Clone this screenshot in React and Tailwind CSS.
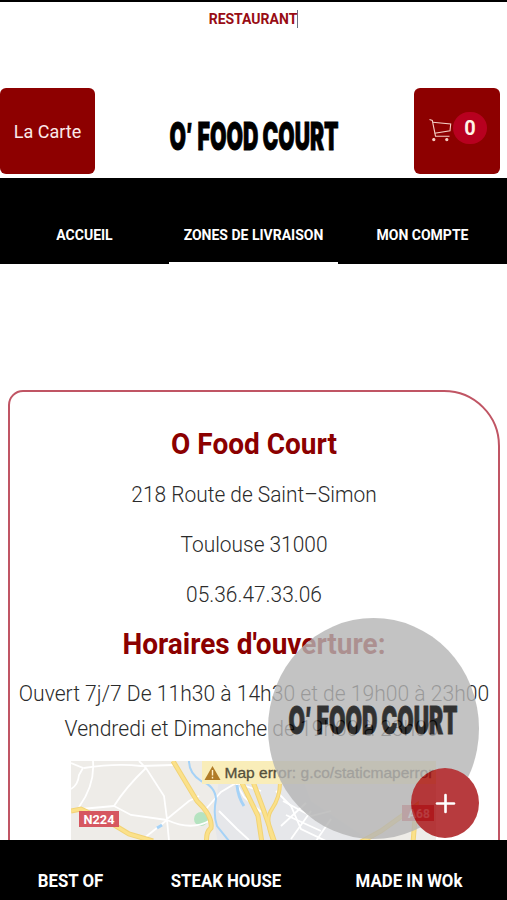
import { Plus } from "lucide-react";

const navItems = [
  { label: "ACCUEIL", active: false },
  { label: "ZONES DE LIVRAISON", active: true },
  { label: "MON COMPTE", active: false },
];

const address = ["218 Route de Saint–Simon", "Toulouse 31000", "05.36.47.33.06"];

const hours = [
  "Ouvert 7j/7 De 11h30 à 14h30 et de 19h00 à 23h00",
  "Vendredi et Dimanche de 19h00 à 23h00",
];

function Logo() {
  return (
    <svg
      viewBox="0 0 172 40"
      className="block w-[172px] h-10"
      role="img"
      fontSize="38"
      fontWeight="900"
      fontFamily="Inter, sans-serif"
      stroke="#000"
      strokeWidth="0.9"
    >
      <text x="0.5" y="33.5" textLength="16.5" lengthAdjust="spacingAndGlyphs">O</text>
      <text x="17" y="31" fontSize="33" textLength="7" lengthAdjust="spacingAndGlyphs" strokeWidth="0.3">′</text>
      <text x="28.5" y="33.5" textLength="61" lengthAdjust="spacingAndGlyphs">FOOD</text>
      <text x="93.5" y="33.5" textLength="76" lengthAdjust="spacingAndGlyphs">COURT</text>
    </svg>
  );
}

function CartIcon() {
  return (
    <svg viewBox="0 0 24 24" className="w-6 h-6" fill="none" stroke="#f6cfc4" strokeWidth="1.1">
      <path d="M0.5 1.5 L3.3 2.4 L6.5 18.2 H20.5" />
      <path d="M3.8 4.2 L21.7 6 L21 12.7 L5.6 15.3" />
      <circle cx="4.8" cy="21.6" r="1.1" fill="#f6cfc4" />
      <circle cx="17.8" cy="21.6" r="1.1" fill="#f6cfc4" />
    </svg>
  );
}

// Static map of the surroundings
function StreetMap() {
  return (
    <svg viewBox="0 0 365 100" className="block w-[365px] h-[100px] mr-0.5">
      <rect width="365" height="100" fill="#eeece8" />
      <path d="M150 0 L225 0 L240 40 L300 80 V100 H150 L143 60 Z" fill="#e6e7ea" />
      <circle cx="130" cy="58" r="7" fill="#b5e3c0" />
      <g fill="none" stroke="#fff" strokeWidth="1.8">
        <path d="M0 28 Q7 24 8 14 L12 7 L0 2" />
        <path d="M8 46 Q24 24 22 0" />
        <path d="M13 7 Q45 2 70 5 L102 4" />
        <path d="M68 0 L75 7 L93 35 L96 58 L118 40 L128 35" />
        <path d="M75 7 Q55 26 43 45 L60 54 L96 59" />
        <path d="M43 45 L10 48 M96 59 L72 78 M96 59 L98 80 M96 59 Q120 70 138 60" />
        <path d="M135 48 L150 31 L165 22 L173 36 L190 51" />
        <path d="M148 50 L166 68 L178 79 M165 22 L190 30 M205 30 L220 45 L230 68 L255 80" />
        <path d="M210 65 L235 42 M212 40 L240 55 L260 50 M215 54 L250 70 M220 78 L240 50 M245 80 L260 58" />
      </g>
      <g fill="none" stroke="#a5d2f7" strokeWidth="2">
        <path d="M118 0 Q118 12 130 20 Q144 25 145 38 Q142 54 146 65 L158 80" />
        <path d="M166 24 Q167 36 173 45" strokeWidth="3" />
        <path d="M86 67 L91 64" strokeWidth="3" />
      </g>
      <g fill="none" stroke="#f2d375" strokeWidth="5">
        <path d="M102 0 L126 40 Q142 55 140 67 Q134 72 136 84" />
        <path d="M0 50 L10 48 L40 62 L58 73 L82 80" />
        <path d="M170 20 L187 55 L191 82 M181 18 L193 50 L204 82" />
        <path d="M209 22 Q209 36 201 48 Q193 58 203 82" strokeWidth="4" />
        <path d="M288 82 L310 70 L345 45 L342 82" />
      </g>
      <g fill="none" stroke="#fbe18a" strokeWidth="3">
        <path d="M102 0 L126 40 Q142 55 140 67 Q134 72 136 84" />
        <path d="M0 50 L10 48 L40 62 L58 73 L82 80" />
        <path d="M170 20 L187 55 L191 82 M181 18 L193 50 L204 82" />
        <path d="M209 22 Q209 36 201 48 Q193 58 203 82" strokeWidth="2" />
        <path d="M288 82 L310 70 L345 45 L342 82" />
      </g>
      <rect x="8" y="50" width="40" height="16" fill="#d65760" />
      <text x="12.5" y="63" fontSize="13" fontWeight="700" fill="#fff" textLength="31" lengthAdjust="spacingAndGlyphs" fontFamily="Roboto, sans-serif">
        N224
      </text>
      <rect x="331" y="44" width="32" height="16" fill="#d65760" />
      <text x="337" y="57" fontSize="13" fontWeight="700" fill="#fff" textLength="22" lengthAdjust="spacingAndGlyphs" fontFamily="Roboto, sans-serif">
        A68
      </text>
      <rect x="131" y="0" width="234" height="23" fill="#f9edb9" />
      <path d="M141.5 5 L149.5 19 H133.5 Z" fill="#b17c27" />
      <path d="M141.5 9 V14.5 M141.5 15.8 V17.4" stroke="#fff0c8" strokeWidth="1.4" />
      <text x="153.5" y="17" fontSize="14.5" fill="#55503c" textLength="209" lengthAdjust="spacingAndGlyphs" fontFamily="Liberation Sans, sans-serif" stroke="#55503c" strokeWidth="0.3">
        Map error: g.co/staticmaperror
      </text>
    </svg>
  );
}

export default function App() {
  return (
    <div className="relative flex flex-col w-[507px] h-[900px] overflow-hidden bg-white border-t-2 border-black font-[Roboto,sans-serif]">
      {/* Top bar */}
      <header className="flex flex-col h-44 shrink-0">
        <div className="flex justify-center pt-2">
          <span className="h-[18px] border-r border-gray-500 text-sm leading-[19px] font-bold text-[#980c14]">
            RESTAURANT
          </span>
        </div>
        <div className="flex items-center justify-between mt-[60px] pr-[7px]">
          <button className="w-[95px] h-[86px] pt-0.5 rounded-md bg-[#8d0000] text-lg text-[#fbeaea]">
            <span className="inline-block scale-y-105">La Carte</span>
          </button>
          <div className="pt-2.5">
            <Logo />
          </div>
          <button className="flex items-center w-[86px] h-[86px] pl-[15px] pb-1.5 rounded-md bg-[#8d0000]">
            <span className="pt-1">
              <CartIcon />
            </span>
            <span className="flex items-center justify-center w-[34px] h-8 rounded-full bg-[#b8001f] text-xl font-bold text-[#fff3e6]">
              0
            </span>
          </button>
        </div>
      </header>

      {/* Tabs */}
      <nav className="grid grid-cols-3 h-[86px] shrink-0 bg-black">
        {navItems.map((item) => (
          <a
            key={item.label}
            className={`flex items-center justify-center pt-[29px] border-b-2 text-sm font-bold whitespace-nowrap text-white ${
              item.active ? "border-white" : "border-black"
            }`}
          >
            <span className="scale-y-105">{item.label}</span>
          </a>
        ))}
      </nav>

      {/* Restaurant card */}
      <main className="flex-1 min-h-0 overflow-hidden pl-2 pt-[126px] pr-[7px]">
        <section className="flex flex-col items-center h-[600px] pt-7 border-2 border-[#c05564] rounded-tl-[15px] rounded-tr-[56px] whitespace-nowrap text-[#2b2b2b]">
          <h1 className="scale-y-105 text-[28px] leading-[50px] font-bold text-[#8b0000]">O Food Court</h1>
          {address.map((line) => (
            <p key={line} className="scale-y-105 text-[20.9px] leading-[50px] font-light">
              {line}
            </p>
          ))}
          <h2 className="scale-y-105 text-[28px] leading-[50px] font-bold text-[#8b0000]">Horaires d'ouverture:</h2>
          <div className="pt-1.5 pb-[15px] text-center">
            {hours.map((line) => (
              <p key={line} className="scale-y-105 text-[21.1px] leading-[35px] font-light last:pr-[5px]">
                {line}
              </p>
            ))}
          </div>
          <StreetMap />
        </section>
      </main>

      {/* Category bar */}
      <footer className="flex items-center h-[60px] shrink-0 pt-[23px] bg-black text-[16.8px] font-bold whitespace-nowrap text-white">
        <span className="w-[141px] text-center scale-y-105">BEST OF</span>
        <span className="w-[170px] text-center scale-y-105">STEAK HOUSE</span>
        <span className="flex-1 text-center scale-y-105">MADE IN WOk</span>
      </footer>

      {/* Floating bubble */}
      <div className="absolute left-[268px] top-[616px] w-[211px] h-[221px] opacity-80">
        <div className="flex justify-center pt-[82px] w-full h-full rounded-[50%] bg-[#b5b5b5]">
          <Logo />
        </div>
        <button className="absolute right-0 bottom-px flex items-center justify-center w-[68px] h-[70px] rounded-[50%] bg-[#a60b0e] text-white">
          <Plus className="w-[29px] h-[29px]" strokeWidth={2.2} />
        </button>
      </div>
    </div>
  );
}
